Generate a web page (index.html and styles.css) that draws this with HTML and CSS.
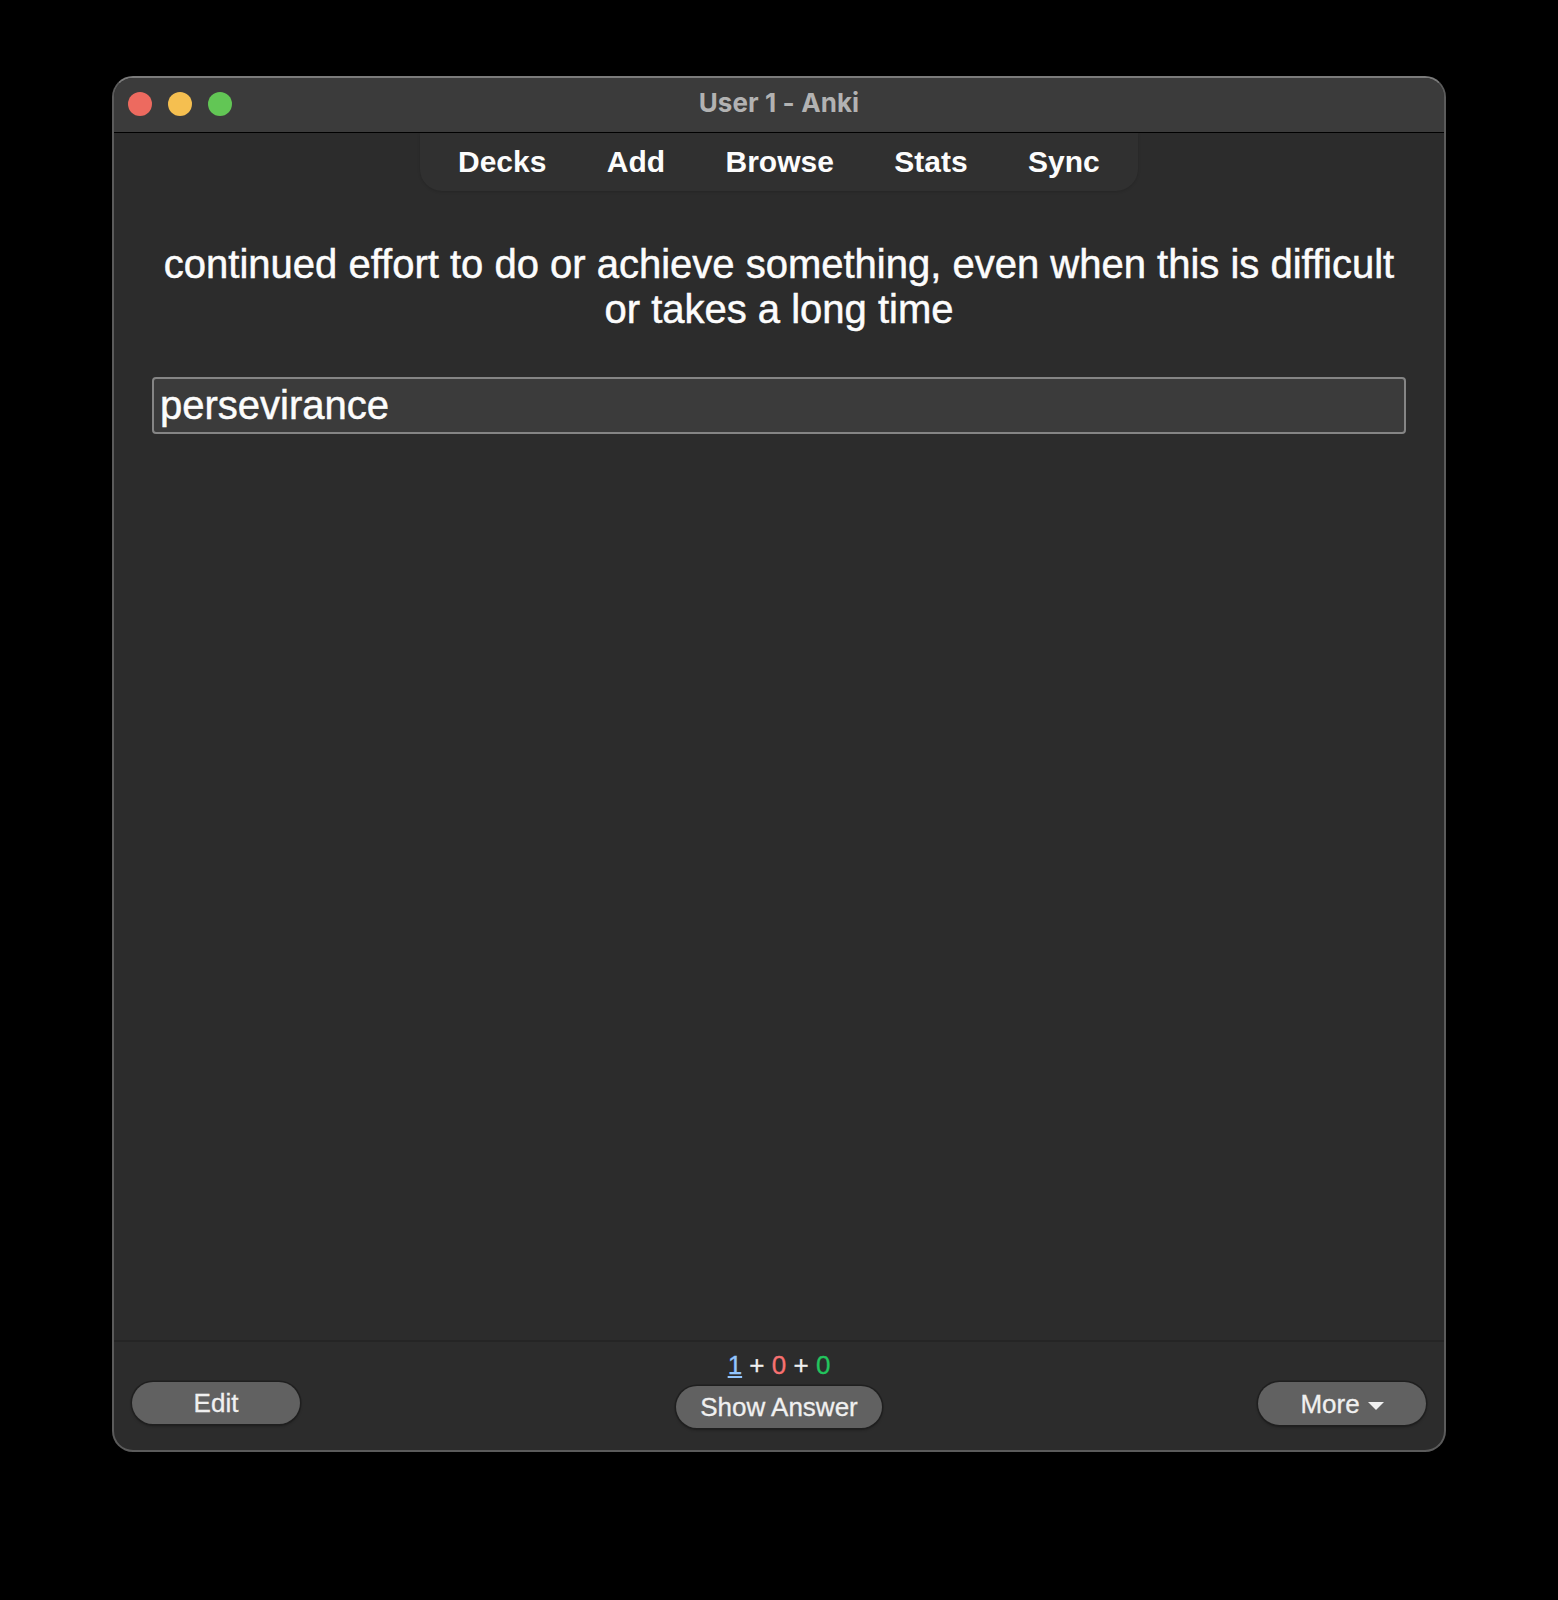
FILE: index.html
```html
<!DOCTYPE html>
<html lang="en">
<head>
<meta charset="utf-8">
<title>User 1 - Anki</title>
<link rel="stylesheet" href="styles.css">
</head>
<body>
<div class="window">
  <header class="titlebar">
    <div class="lights">
      <span class="light close"></span>
      <span class="light minimize"></span>
      <span class="light zoom"></span>
    </div>
    <h1 class="title">User 1 - Anki</h1>
  </header>
  <nav class="toolbar">
    <a>Decks</a><a>Add</a><a>Browse</a><a>Stats</a><a>Sync</a>
  </nav>
  <main class="card">
    <p class="question">continued effort to do or achieve something, even when this is difficult<br>or takes a long time</p>
    <div class="answer">persevirance</div>
  </main>
  <footer class="bottom">
    <button class="btn side">Edit</button>
    <div class="middle">
      <div class="counts"><span class="new">1</span> + <span class="learn">0</span> + <span class="review">0</span></div>
      <button class="btn show">Show Answer</button>
    </div>
    <button class="btn side more">More<svg class="caret" width="16" height="8" viewBox="0 0 16 8"><path d="M0 0H16L8 8Z" fill="currentColor"/></svg></button>
  </footer>
</div>
</body>
</html>
```
FILE: styles.css
```css
* { box-sizing: border-box; }

body {
  margin: 0;
  height: 1600px;
  padding: 76px 112px 0;
  background: #000;
  font-family: "Liberation Sans", Arial, sans-serif;
  color: #fcfcfc;
}

.window {
  display: flex;
  flex-direction: column;
  width: 1334px;
  height: 1376px;
  border: 2px solid #5b5b5b;
  border-top-color: #7b7b7b;
  border-radius: 21px;
  background: #2c2c2c;
  overflow: hidden;
}

.titlebar {
  display: grid;
  grid-template-columns: 1fr auto 1fr;
  align-items: center;
  height: 55px;
  background: #3b3b3b;
  border-bottom: 1px solid #000;
}

.lights {
  display: flex;
  gap: 16px;
  padding-left: 14px;
  padding-bottom: 2px;
}

.light {
  width: 24px;
  height: 24px;
  border-radius: 50%;
}

.close { background: #ed6a5f; }
.minimize { background: #f5bf50; }
.zoom { background: #62c655; }

.title {
  margin: 0;
  padding-bottom: 4px;
  font: 700 26px/30px Inter, sans-serif;
  letter-spacing: 0.1px;
  color: #b2b2b2;
}

.toolbar {
  display: flex;
  align-self: center;
  gap: 60.4px;
  width: 718px;
  height: 58px;
  padding-left: 38px;
  border-radius: 0 0 22px 22px;
  background: #303030;
  box-shadow: 0 1px 3px rgba(0, 0, 0, 0.15);
  font-size: 30px;
  font-weight: 700;
  line-height: 58px;
}

.card {
  flex: 1;
  padding: 51px 38px 0;
  font-size: 40px;
  -webkit-text-stroke: 0.5px currentColor;
}

.question {
  margin: 0 0 45px;
  line-height: 45px;
  text-align: center;
  white-space: nowrap;
}

.answer {
  height: 57px;
  padding-left: 6px;
  border: 2px solid #858585;
  border-radius: 4px;
  background: #3b3b3b;
  line-height: 53px;
}

.bottom {
  display: flex;
  justify-content: space-between;
  align-items: flex-start;
  height: 110px;
  padding: 8px 18px 0;
  border-top: 2px solid #252525;
  font-size: 26px;
  color: #f0f0f0;
  -webkit-text-stroke: 0.3px currentColor;
}

.btn {
  display: flex;
  justify-content: center;
  align-items: center;
  height: 42px;
  padding: 0;
  border: 0;
  border-radius: 22px;
  background: #616161;
  box-shadow: 0 0 0 1.5px #1f1f1f, 0 2px 3px rgba(0, 0, 0, 0.35);
  color: #f0f0f0;
  font: 26px/42px "Liberation Sans", Arial, sans-serif;
}

.side {
  width: 168px;
  margin-top: 32px;
}

.more {
  height: 43px;
  gap: 8px;
}

.caret { margin-top: 5px; }

.middle {
  display: flex;
  flex-direction: column;
  align-items: center;
  gap: 6px;
}

.show { width: 206px; }

.counts { line-height: 30px; }

.new {
  color: #93c5fd;
  -webkit-text-stroke: 0.3px #93c5fd;
  text-decoration: underline;
  text-decoration-thickness: 2px;
  text-underline-offset: 2px;
}

.learn {
  color: #f87171;
  -webkit-text-stroke: 0.3px #f87171;
}

.review {
  color: #22c55e;
  -webkit-text-stroke: 0.3px #22c55e;
}
```
